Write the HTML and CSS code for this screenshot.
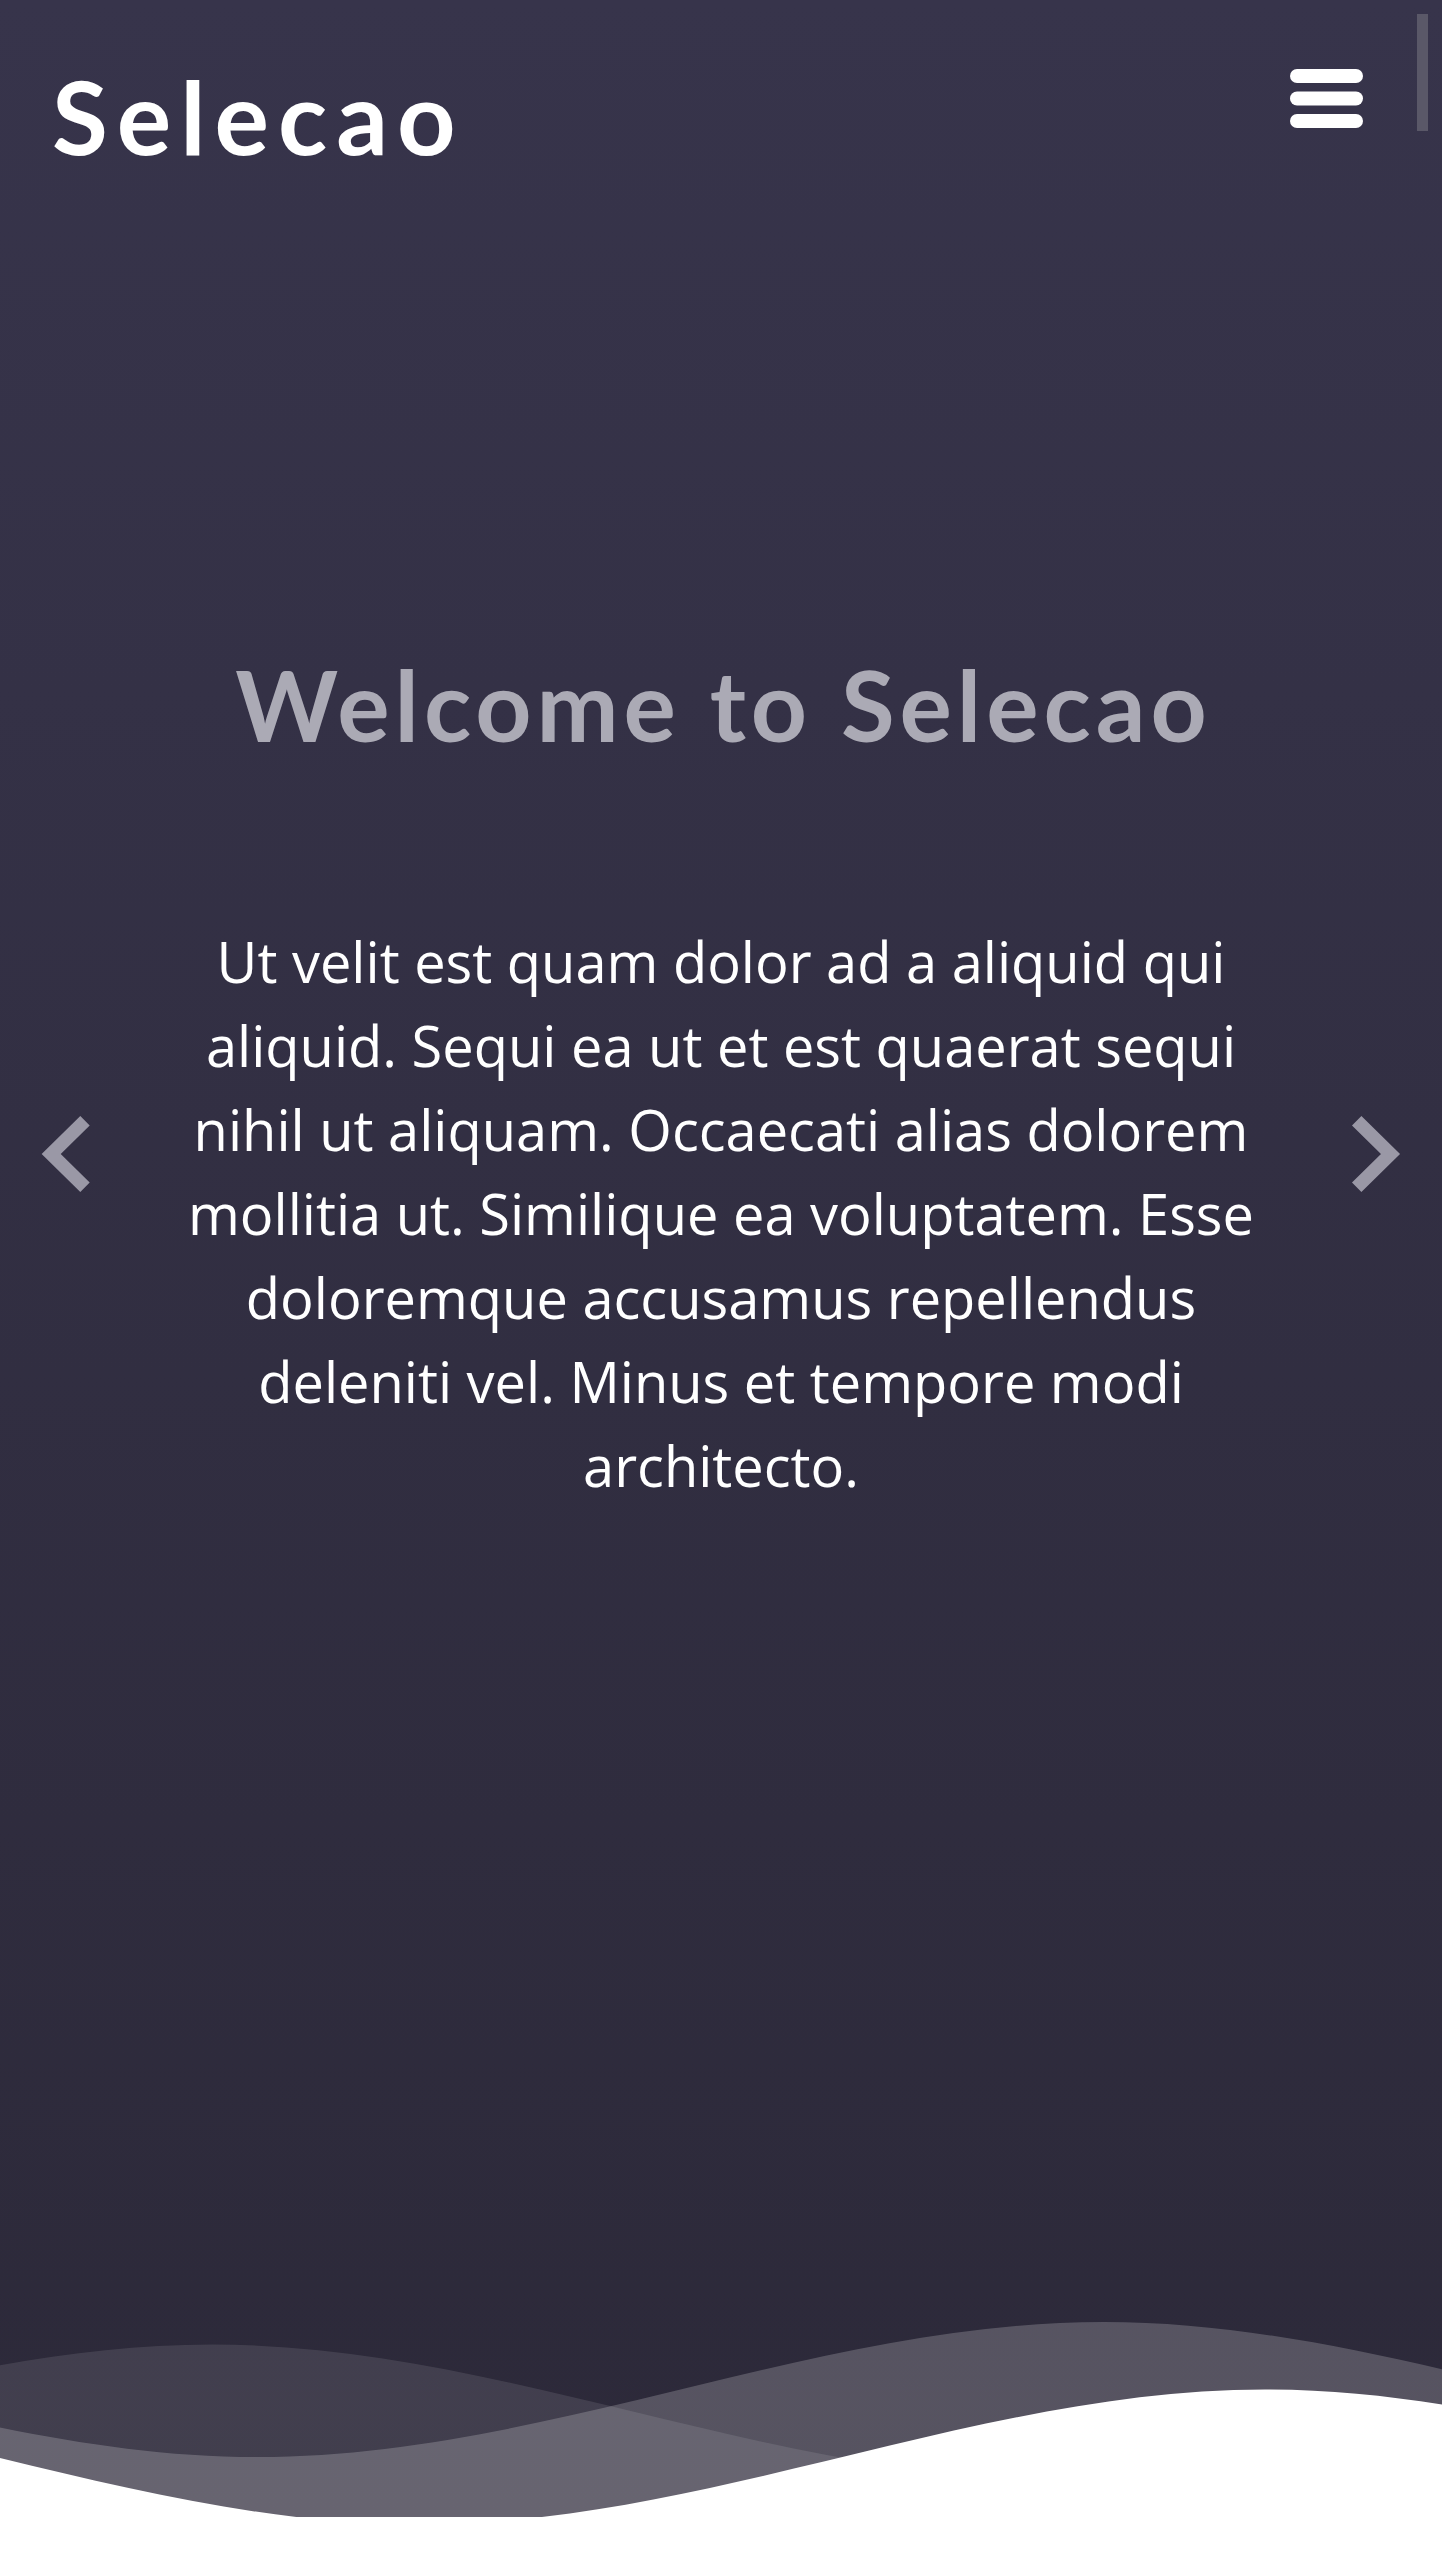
FILE: index.html
```html
<!DOCTYPE html>
<html lang="en">
<head>
<meta charset="utf-8">
<title>Selecao</title>
<link rel="stylesheet" href="styles.css">
</head>
<body>
<section class="hero">
  <header class="header">
    <h1 class="logo">Selecao</h1>
    <button class="menu-toggle" aria-label="Menu">
      <svg width="73" height="59" viewBox="0 0 73 59">
        <rect x="0" y="0" width="73" height="14" rx="7" fill="#fff"/>
        <rect x="0" y="22.5" width="73" height="14" rx="7" fill="#fff"/>
        <rect x="0" y="45" width="73" height="14" rx="7" fill="#fff"/>
      </svg>
    </button>
  </header>

  <div class="carousel">
    <div class="carousel-content">
      <h2 class="hero-title">Welcome to Selecao</h2>
      <p class="hero-text">Ut velit est quam dolor ad a aliquid qui aliquid. Sequi ea ut et est quaerat sequi nihil ut aliquam. Occaecati alias dolorem mollitia ut. Similique ea voluptatem. Esse doloremque accusamus repellendus deleniti vel. Minus et tempore modi architecto.</p>
    </div>
    <a class="ctrl ctrl-prev" aria-label="Previous">
      <svg width="70" height="100" viewBox="0 0 70 100">
        <polyline points="55,16.7 21.2,50 55,83.3" fill="none" stroke="currentColor" stroke-width="13.4" stroke-linejoin="miter" stroke-linecap="butt"/>
      </svg>
    </a>
    <a class="ctrl ctrl-next" aria-label="Next">
      <svg width="70" height="100" viewBox="0 0 70 100">
        <polyline points="14.7,16.7 48.5,50 14.7,83.3" fill="none" stroke="currentColor" stroke-width="13.4" stroke-linejoin="miter" stroke-linecap="butt"/>
      </svg>
    </a>
  </div>

  <svg class="hero-waves" viewBox="0 24 150 28" preserveAspectRatio="none">
    <defs>
      <path id="wave-path" d="M-160 44c30 0 58-18 88-18s 58 18 88 18 58-18 88-18 58 18 88 18 v44h-352z"/>
    </defs>
    <g transform="translate(44.05 0)">
      <use href="#wave-path" x="50" y="3" fill="rgba(255,255,255,.1)"/>
    </g>
    <g transform="translate(-39.2 0)">
      <use href="#wave-path" x="50" y="0" fill="rgba(255,255,255,.2)"/>
    </g>
    <g transform="translate(-22.4 0)">
      <use href="#wave-path" x="50" y="9" fill="#fff"/>
    </g>
  </svg>
</section>
<div class="scroll-thumb"></div>
</body>
</html>
```

FILE: styles.css
```css
* {
  box-sizing: border-box;
}

html, body {
  margin: 0;
  padding: 0;
}

body {
  background: #fff;
  font-family: "Open Sans", "Noto Sans", sans-serif;
  position: relative;
  min-height: 2562px;
}

.hero {
  position: relative;
  width: 100%;
  height: 2517px;
  overflow: hidden;
  display: flex;
  flex-direction: column;
  background: linear-gradient(180deg, #37344b 0%, #2c2939 100%);
}

.header {
  position: absolute;
  top: 0;
  left: 0;
  right: 0;
  z-index: 5;
  display: flex;
  justify-content: space-between;
  align-items: flex-start;
  padding: 0 79px 0 52px;
}

.logo {
  margin: 65px 0 0 0;
  font-family: "Lato", "Noto Sans", sans-serif;
  font-weight: 700;
  font-size: 102px;
  line-height: 1;
  letter-spacing: 9px;
  color: #fff;
}

.menu-toggle {
  margin-top: 69px;
  padding: 0;
  border: 0;
  background: none;
  display: block;
  line-height: 0;
}

.carousel {
  position: relative;
  height: 2307px;
  flex: none;
  display: flex;
  justify-content: center;
}

.carousel-content {
  width: 1442px;
  padding-top: 646px;
  display: flex;
  flex-direction: column;
  align-items: center;
  text-align: center;
}

.hero-title {
  margin: 0;
  padding-left: 5px;
  font-family: "Lato", "Noto Sans", sans-serif;
  font-weight: 700;
  font-size: 98px;
  line-height: 1.2;
  letter-spacing: 5px;
  color: #abaab5;
}

.hero-text {
  width: 1086px;
  margin: 155px 0 0 0;
  font-family: "Open Sans", sans-serif;
  font-size: 56px;
  line-height: 84px;
  color: #fff;
}

.ctrl {
  position: absolute;
  top: 0;
  bottom: 0;
  display: flex;
  align-items: center;
  color: #9a98a6;
}

.ctrl svg {
  display: block;
}

.ctrl-prev {
  left: 30px;
}

.ctrl-next {
  right: 30px;
}

.hero-waves {
  display: block;
  width: 100%;
  height: 210px;
  flex: none;
}

.scroll-thumb {
  position: absolute;
  top: 14px;
  left: 1417px;
  width: 11px;
  height: 117px;
  background: #5a5868;
}
```
